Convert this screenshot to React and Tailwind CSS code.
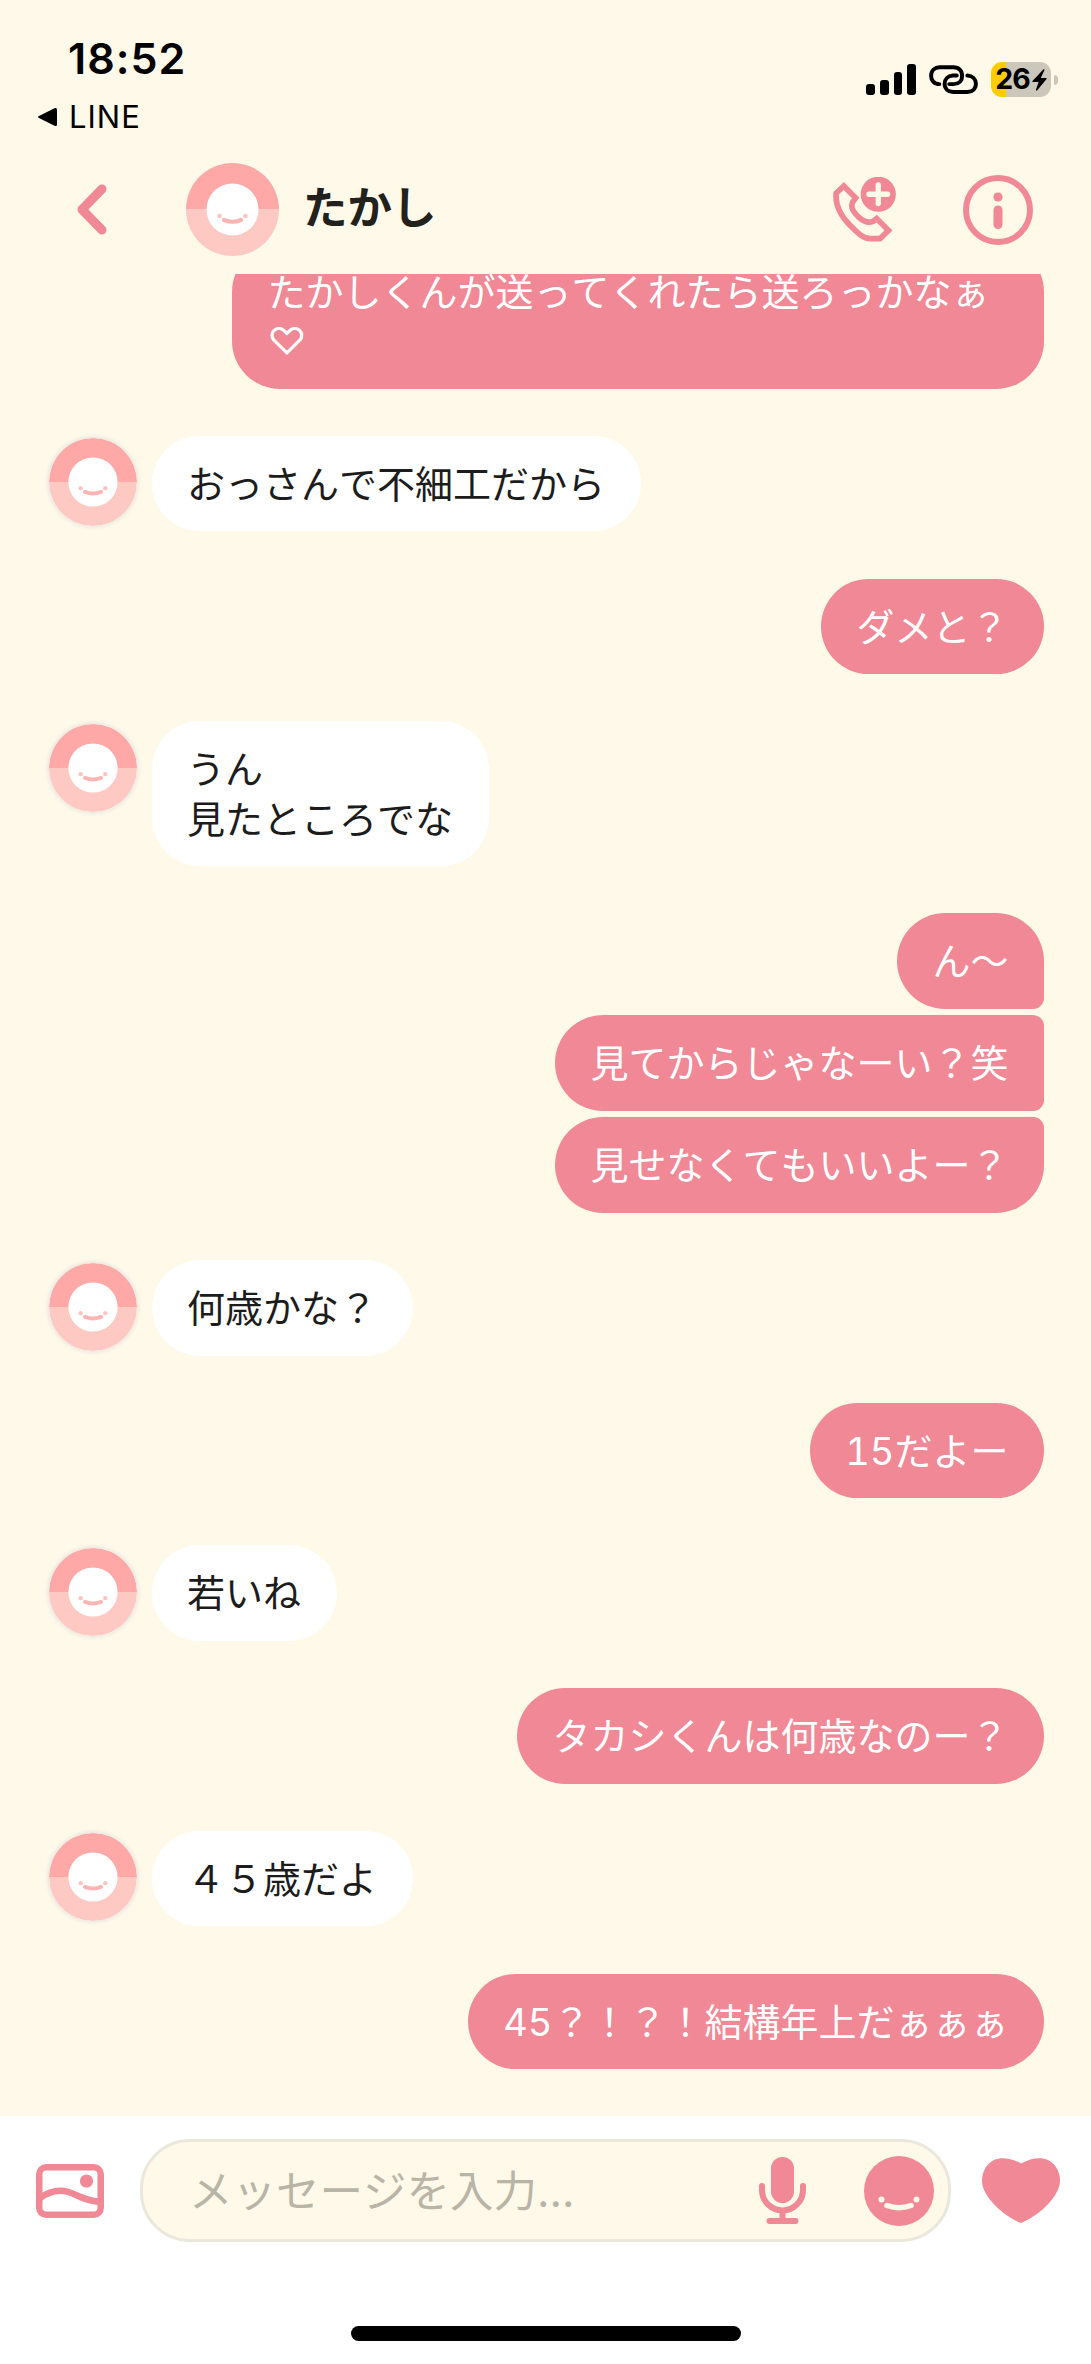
import React from 'react';

const messages = [
  { id: 1, from: 'me', texts: ['たかしくんが送ってくれたら送ろっかなぁ♡'] },
  { id: 2, from: 'them', texts: ['おっさんで不細工だから'] },
  { id: 3, from: 'me', texts: ['ダメと？'] },
  { id: 4, from: 'them', texts: ['うん\n見たところでな'] },
  { id: 5, from: 'me', texts: ['ん〜', '見てからじゃなーい？笑', '見せなくてもいいよー？'] },
  { id: 6, from: 'them', texts: ['何歳かな？'] },
  { id: 7, from: 'me', texts: ['15だよー'] },
  { id: 8, from: 'them', texts: ['若いね'] },
  { id: 9, from: 'me', texts: ['タカシくんは何歳なのー？'] },
  { id: 10, from: 'them', texts: ['４５歳だよ'] },
  { id: 11, from: 'me', texts: ['45？！？！結構年上だぁぁぁ'] },
];

const Avatar = ({ className }) => (
  <svg viewBox="0 0 93 93" className={className}>
    <path d="M0 46.5a46.5 46.5 0 0 1 93 0z" fill="#ffa8a8" />
    <path d="M0 46.5a46.5 46.5 0 0 0 93 0z" fill="#fec8c3" />
    <circle cx="46.5" cy="46.5" r="26" fill="#fff" />
    <circle cx="33.5" cy="53" r="2.3" fill="#fec4c0" />
    <circle cx="59.5" cy="53" r="2.3" fill="#fec4c0" />
    <path d="M38 57q8.500 3.500 17 0" fill="none" stroke="#fdb4b4" strokeWidth="4.200" strokeLinecap="round" />
  </svg>
);

const StatusBar = () => (
  <div className="flex h-[145px] shrink-0 items-start justify-between text-black">
    <div className="pt-[32px] pl-[37px]">
      <div className="pl-[31px] text-[43px] leading-[52px] font-semibold tracking-[1px]">18:52</div>
      <div className="mt-[14px] flex items-center">
        <svg viewBox="0 0 21 20" className="h-[20px] w-[21px]">
          <path d="M2 9L18 1q2-.5 2 1.500v15q0 2-2 1.500L2 11q-2-1 0-2z" />
        </svg>
        <span className="ml-[11px] text-[31px] leading-[38px] tracking-[1px]">LINE</span>
      </div>
    </div>
    <div className="flex items-center pt-[62px] pr-[33px]">
      <div className="flex h-[31px] items-end gap-[5px]">
        <div className="h-[11px] w-[8.700px] rounded-[3px] bg-black" />
        <div className="h-[15px] w-[8.700px] rounded-[3px] bg-black" />
        <div className="h-[23px] w-[8.700px] rounded-[3px] bg-black" />
        <div className="h-[31px] w-[8.700px] rounded-[3px] bg-black" />
      </div>
      <svg viewBox="447 104 148 88" className="ml-[13px] h-[29px] w-[49px]" fill="none" stroke="#000" strokeWidth="12" strokeLinecap="round">
        <path d="M478 162C462 162 453 150 453 137C453 121 464 111 479 111H521C537 111 547 121 547 137C547 152 537 162 521 162H508" />
        <path d="M563 136C579 137 589 147 589 161C589 176 578 186 563 186H520C505 186 494 176 494 161C494 147 504 137 519 136H531" />
      </svg>
      <div className="ml-[13px] flex h-[35px] w-[60px] items-center justify-center rounded-[11px] bg-[linear-gradient(to_right,#ffcc00_15.500px,#cbc7ba_15.500px)]">
        <span className="text-[28.500px] leading-none font-bold tracking-[-1px]">26</span>
        <svg viewBox="0 0 43 64" className="ml-[2px] h-[22px] w-[15px]">
          <path d="M33 1L1 35q-2 3 2 3h16L11 60q0 5 4 2L42 29q2-3-2-3H25L36 3q0-4-3-2z" />
        </svg>
      </div>
      <div className="ml-[3px] h-[10px] w-[4px] rounded-r-full bg-[#cbc7ba]" />
    </div>
  </div>
);

const Header = () => (
  <div className="flex h-[129px] shrink-0 items-center pr-[58px] pl-[77px]">
    <svg viewBox="0 0 30 51" className="h-[51px] w-[30px]">
      <path d="M25 5L5 25.500L25 46" fill="none" stroke="#f08896" strokeWidth="9" strokeLinecap="round" strokeLinejoin="round" />
    </svg>
    <Avatar className="ml-[79px] size-[93px]" />
    <h1 className="ml-[24px] pb-[3px] text-[44.500px] leading-[60px] font-bold text-[#22211c] [font-kerning:none]">たかし</h1>
    <svg viewBox="157 443 192 196" className="ml-auto h-[65px] w-[64px]">
      <path
        d="M192 470L169 492C165 535 188 566 213 591C236 614 252 629 272 629H301L327 604L291 568L280 577C263 584 248 574 237 564C221 548 211 535 219 518L228 506Z"
        fill="none"
        stroke="#f08896"
        strokeWidth="17"
      />
      <circle cx="296" cy="495" r="53" fill="#f08896" />
      <path d="M296 467v56M268 495h56" stroke="#fff9ea" strokeWidth="16" strokeLinecap="round" />
    </svg>
    <svg viewBox="0 0 70 70" className="ml-[67px] size-[70px]">
      <circle cx="35" cy="35" r="32" fill="none" stroke="#f08896" strokeWidth="6" />
      <circle cx="35" cy="22" r="4.600" fill="#f08896" />
      <path d="M35 35v14.500" stroke="#f08896" strokeWidth="9" strokeLinecap="round" />
    </svg>
  </div>
);

const Message = ({ from, texts }) => {
  if (from === 'them') {
    return (
      <div className="flex items-start gap-[15px] pl-[49px]">
        <Avatar className="mt-[2.500px] size-[88px] rounded-full shadow-[0_0_4px_1px_#e3e1dc]" />
        <div className="rounded-[48px] bg-white pt-[24px] pr-[36px] pb-[22px] pl-[35px] whitespace-pre-line text-[#1c1c1c]">{texts[0]}</div>
      </div>
    );
  }

  return (
    <div className="flex flex-col items-end gap-[6.500px] pr-[47px]">
      {texts.map((text, i) => (
        <div
          key={text}
          className={`max-w-[812px] rounded-[48px] bg-[#f08896] px-[35.500px] pt-[24px] pb-[22px] text-white ${i > 0 ? 'rounded-tr-[11px]' : ''} ${i < texts.length - 1 ? 'rounded-br-[11px]' : ''}`}
        >
          {text}
        </div>
      ))}
    </div>
  );
};

const InputBar = () => (
  <div className="flex h-[248px] shrink-0 flex-col justify-between bg-white pb-[23px]">
    <div className="flex items-center pt-[23px] pr-[31px] pl-[36px]">
      <svg viewBox="0 0 68 54" className="h-[54px] w-[68px]" fill="none" stroke="#f08896" strokeWidth="6.500">
        <rect x="3.250" y="3.250" width="61.500" height="47.500" rx="7" />
        <path d="M4 34C15 26 27 24 40 31C48 35 55 37 64 38" />
        <circle cx="50.500" cy="17" r="6.600" fill="#f08896" stroke="none" />
      </svg>
      <div className="ml-[36px] flex h-[103px] w-[811px] items-center rounded-[50px] border-[3px] border-[#e9e8db] bg-[#fff9ea] pr-[14px] pl-[46px]">
        <span className="text-[43.500px] leading-[60px] text-[#b9b5a6] [font-kerning:none]">
          メッセージを入力...
        </span>
        <svg viewBox="0 0 47 67" className="ml-auto h-[67px] w-[47px]" fill="none" stroke="#f08896" strokeWidth="6" strokeLinecap="round">
          <rect x="12" y="0" width="23" height="46" rx="11.500" fill="#f08896" stroke="none" />
          <path d="M3 29v4a20.500 20.500 0 0 0 41 0v-4M23.500 54v9M10.500 64h26" />
        </svg>
        <svg viewBox="0 0 70 70" className="ml-[58px] size-[70px]">
          <circle cx="35" cy="35" r="35" fill="#f08896" />
          <circle cx="17.500" cy="43.500" r="3" fill="#fff9ea" />
          <circle cx="52.500" cy="43.500" r="3" fill="#fff9ea" />
          <path d="M23 49.500q12 4.500 24 0" fill="none" stroke="#fff9ea" strokeWidth="5.500" strokeLinecap="round" />
        </svg>
      </div>
      <svg viewBox="0 0 78 65" className="ml-auto h-[65px] w-[78px]">
        <path d="M39 5.500C49 0 59 -1 66 2C74 6 78 14 78 23C78 37 59 57 39 65C19 57 0 37 0 23C0 14 4 6 12 2C19 -1 29 0 39 5.500Z" fill="#f08896" />
      </svg>
    </div>
    <div className="mx-auto h-[15px] w-[390px] rounded-full bg-black" />
  </div>
);

const App = () => {
  return (
    <div className="flex h-[2364px] w-[1091px] flex-col overflow-hidden bg-[#fff9ea] font-['Inter','Noto_Sans_CJK_JP',sans-serif]">
      <StatusBar />
      <Header />
      <div className="flex min-h-0 flex-1 flex-col justify-end gap-[47.200px] overflow-hidden pb-[47px] text-[38px] leading-[49.500px] tabular-nums [font-kerning:none]">
        {messages.map((message) => (
          <Message key={message.id} from={message.from} texts={message.texts} />
        ))}
      </div>
      <InputBar />
    </div>
  );
};

export default App;
